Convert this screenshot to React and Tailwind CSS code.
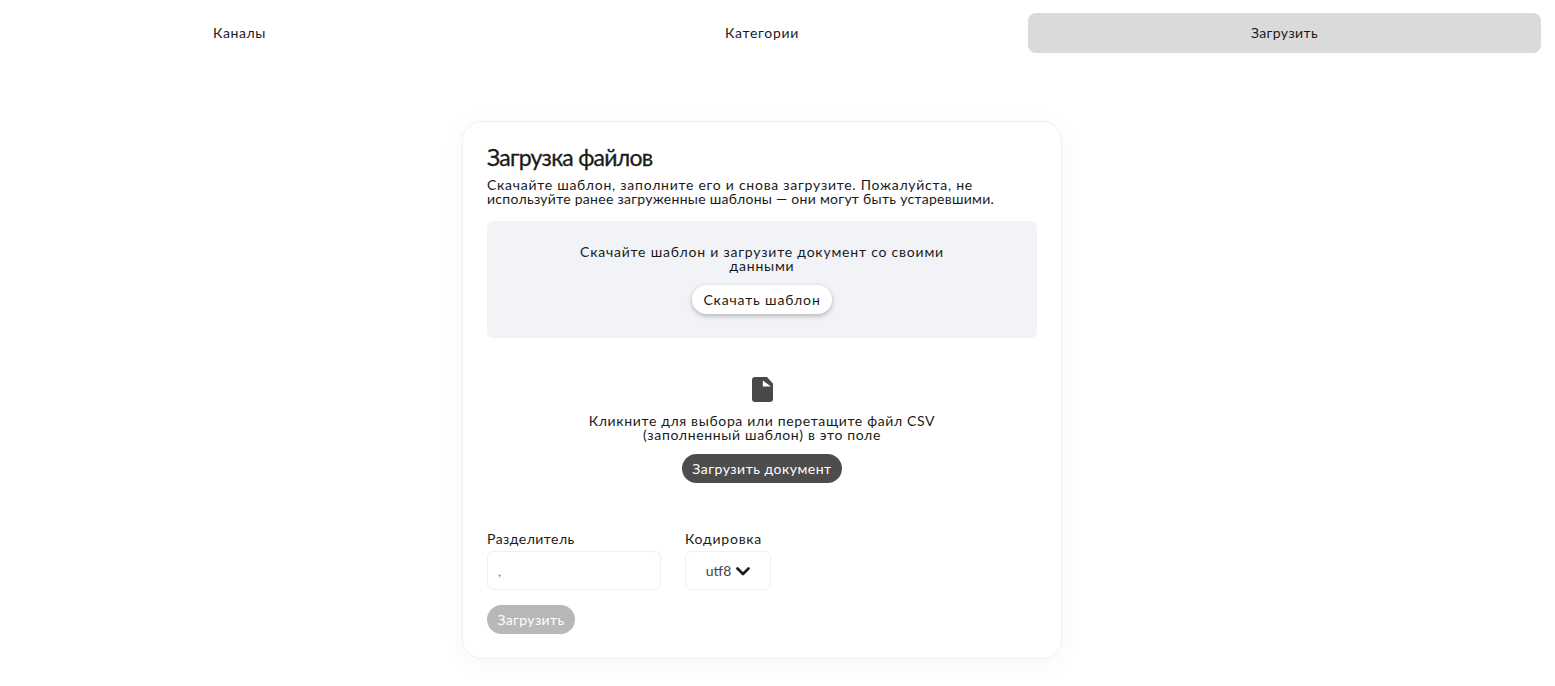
const fontStack = 'font-["Lato","Open_Sans",sans-serif]'

const Tab = ({ label, active, className = '' }) => (
  <div
    className={`h-10 flex items-center justify-center rounded-lg text-sm text-[#1a1a1a] ${className} ${
      active ? 'bg-[#dadada]' : ''
    }`}
  >
    {label}
  </div>
)

const App = () => {
  return (
    <div className={`min-h-[686px] bg-white overflow-hidden ${fontStack}`}>
      <div className="grid grid-cols-[513px_513px_513px] gap-x-[9.5px] ml-[-17px] pt-[13px]">
        <Tab label="Каналы" className="tracking-[0.6px]" />
        <Tab label="Категории" className="tracking-[0.7px]" />
        <Tab label="Загрузить" active className="tracking-[0.4px]" />
      </div>

      <div className="w-[600px] ml-[462px] mt-[68px] h-[538px] rounded-[20px] border border-[#f0f0f0] bg-white px-6 pt-[21px] shadow-[0_4px_24px_rgba(0,0,0,0.04)] text-[#1a1a1a]">
        <h1 className="text-[23px] leading-[28px] font-normal tracking-[-0.75px] [-webkit-text-stroke:0.3px_#1a1a1a]">Загрузка файлов</h1>
        <p className="mt-[7px] text-sm leading-[14px] w-[550px]">
          <span className="block tracking-[0.74px]">Скачайте шаблон, заполните его и снова загрузите. Пожалуйста, не</span>
          <span className="block tracking-[0.28px]">используйте ранее загруженные шаблоны — они могут быть устаревшими.</span>
        </p>

        <div className="mt-[15px] h-[117px] rounded-md bg-[#f2f3f7] flex flex-col items-center pt-[24px]">
          <p className="w-[400px] text-center text-sm leading-[14px] tracking-[0.79px]">
            Скачайте шаблон и загрузите документ со своими данными
          </p>
          <button className="mt-[12px] h-[29px] w-[140px] rounded-full bg-white text-sm tracking-[0.85px] shadow-[0_2px_5px_rgba(0,0,0,0.25)]">
            Скачать шаблон
          </button>
        </div>

        <div className="mt-[39px] flex flex-col items-center">
          <svg width="21" height="25" viewBox="0 0 21 25" className="text-[#484848] ml-px">
            <path
              fill="currentColor"
              d="M3 0h11.5a1 1 0 0 1 .7.3l5.5 6a1 1 0 0 1 .3.7V22a3 3 0 0 1-3 3H3a3 3 0 0 1-3-3V3a3 3 0 0 1 3-3Z"
            />
            <path fill="#fff" d="M10.8 3.4 19 9.6H10.8Z" />
          </svg>
          <p className="mt-[12px] w-[360px] text-center text-sm leading-[14px] tracking-[0.65px]">
            Кликните для выбора или перетащите файл CSV (заполненный шаблон) в это поле
          </p>
          <button className="mt-[12px] h-[29px] w-[160px] rounded-full bg-[#4d4d4d] text-white text-sm tracking-[0.5px]">
            Загрузить документ
          </button>
        </div>

        <div className="mt-[47px] flex gap-6">
          <label className="block">
            <span className="block text-sm leading-[17px] tracking-[0.47px]">Разделитель</span>
            <div className="mt-[4px] h-[39px] w-[174px] rounded-md border border-[#f0f0f0] flex items-center pl-[10px] text-sm text-[#777]">
              ,
            </div>
          </label>
          <label className="block">
            <span className="block text-sm leading-[17px] tracking-[0.77px]">Кодировка</span>
            <div className="mt-[4px] h-[39px] w-[86px] rounded-md border border-[#f0f0f0] flex items-center justify-center gap-[5px] text-sm text-[#444]">
              utf8
              <svg width="14" height="9" viewBox="0 0 14 9" fill="none" stroke="#1a1a1a" strokeWidth="2.6" strokeLinecap="round" strokeLinejoin="round" className="mt-[2px]">
                <path d="M1.5 1.5 7 7l5.5-5.5" />
              </svg>
            </div>
          </label>
        </div>

        <button className="mt-[15px] h-[29px] w-[88px] rounded-full bg-[#b8b8b8] text-white text-sm tracking-[0.4px]">
          Загрузить
        </button>
      </div>
    </div>
  )
}

export default App
